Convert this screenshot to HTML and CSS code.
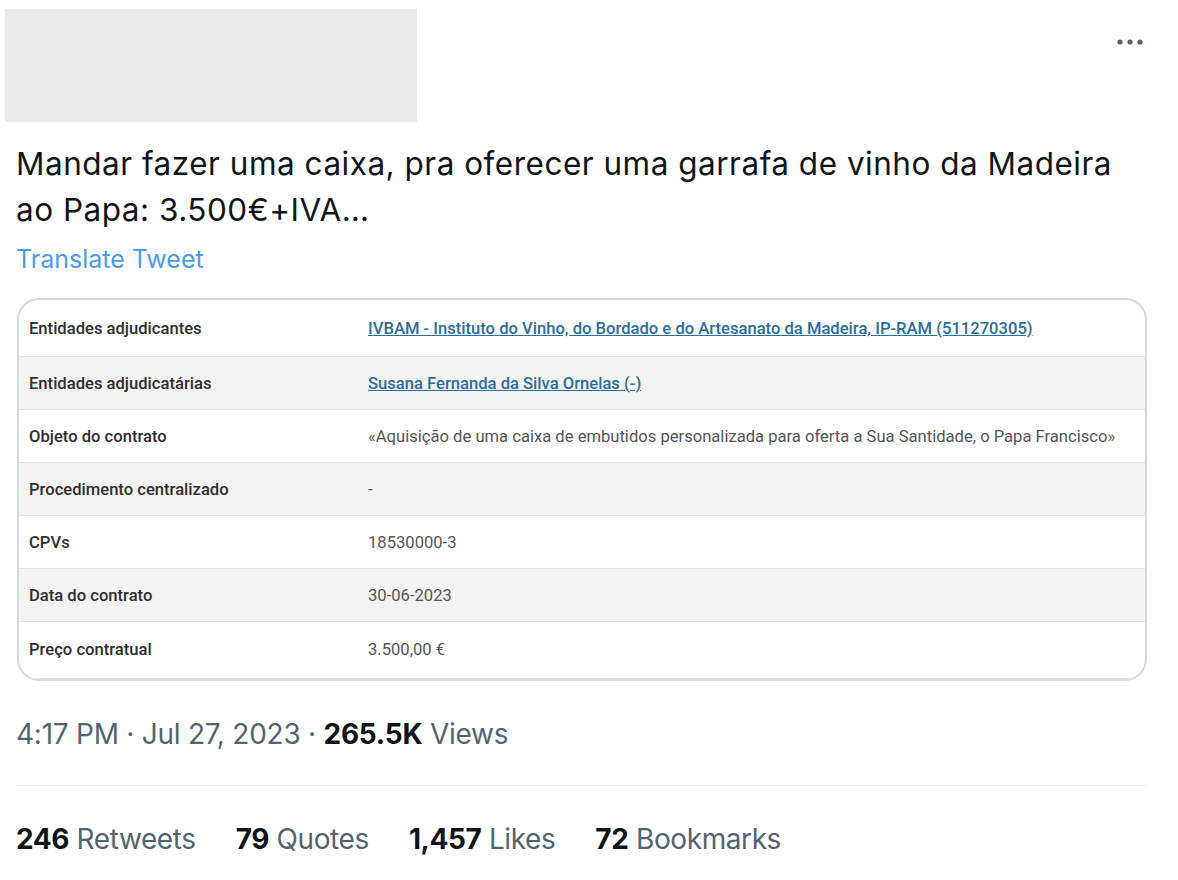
FILE: index.html
```html
<!DOCTYPE html>
<html lang="pt">

<head>
    <meta charset="UTF-8">
    <meta name="viewport" content="width=device-width, initial-scale=1.0">
    <title>Tweet</title>
    <link rel="stylesheet" href="styles.css">
</head>

<body>
    <div class="tweet">
        <div class="head">
            <div class="author"></div>
            <div class="more">
                <svg width="26" height="6" viewBox="0 0 26 6"><circle cx="3" cy="3" r="2.6" /><circle cx="13" cy="3" r="2.6" /><circle cx="23" cy="3" r="2.6" /></svg>
            </div>
        </div>

        <p class="text">Mandar fazer uma caixa, pra oferecer uma garrafa de vinho da Madeira ao Papa: 3.500€+IVA…</p>
        <a class="translate">Translate Tweet</a>

        <div class="card">
            <div class="row"><span class="label">Entidades adjudicantes</span><span class="value"><a>IVBAM - Instituto do Vinho, do Bordado e do Artesanato da Madeira, IP-RAM (511270305)</a></span></div>
            <div class="row"><span class="label">Entidades adjudicatárias</span><span class="value"><a>Susana Fernanda da Silva Ornelas (-)</a></span></div>
            <div class="row"><span class="label">Objeto do contrato</span><span class="value">«Aquisição de uma caixa de embutidos personalizada para oferta a Sua Santidade, o Papa Francisco»</span></div>
            <div class="row"><span class="label">Procedimento centralizado</span><span class="value">-</span></div>
            <div class="row"><span class="label">CPVs</span><span class="value">18530000-3</span></div>
            <div class="row"><span class="label">Data do contrato</span><span class="value">30-06-2023</span></div>
            <div class="row"><span class="label">Preço contratual</span><span class="value">3.500,00 €</span></div>
        </div>

        <div class="time">4:17 PM · Jul 27, 2023 · <b>265.5K</b> Views</div>

        <div class="stats">
            <span><b>246</b> Retweets</span>
            <span><b>79</b> Quotes</span>
            <span><b>1,457</b> Likes</span>
            <span><b>72</b> Bookmarks</span>
        </div>
    </div>
</body>

</html>
```

FILE: styles.css
```css
* {
    margin: 0;
    padding: 0;
    box-sizing: border-box;
}

body {
    background: #fff;
    font-family: Inter, 'Noto Sans', sans-serif;
    color: #0f1419;
}

.tweet {
    width: 1178px;
    padding: 0 31px 0 16px;
}

.head {
    display: flex;
    justify-content: space-between;
    margin-left: -11px;
    padding-top: 9px;
}

.author {
    width: 412px;
    height: 113px;
    background: #ebebeb;
}

.more {
    padding-top: 20px;
    padding-right: 4px;
}

.more svg {
    fill: #536471;
}

.text {
    margin-top: 19px;
    font-size: 31.5px;
    line-height: 46px;
    letter-spacing: 0.5px;
}

.translate {
    display: block;
    margin-top: 10px;
    font-size: 25px;
    line-height: 32px;
    color: #4a9ced;
}

.card {
    margin-top: 23px;
    margin-left: 1px;
    border: 2px solid #d3dbe0;
    border-radius: 22px;
    overflow: hidden;
    font-family: Roboto, sans-serif;
    font-size: 16.6px;
}

.row {
    display: flex;
    align-items: center;
    height: 53px;
    border-bottom: 1px solid #e2e2e2;
}

.row:first-child {
    height: 57px;
    padding-top: 1px;
}

.row:last-child {
    height: 57px;
    padding-bottom: 2px;
}

.row:nth-child(even) {
    background: #f3f3f3;
}

.label {
    width: 349px;
    flex: none;
    padding-left: 10px;
    font-weight: 500;
    color: #2e2e2e;
}

.value {
    color: #555;
}

.value a {
    color: #2d6d9c;
    text-decoration: underline;
    font-weight: 500;
}

.time {
    margin-top: 36px;
    font-size: 28px;
    color: #536471;
    letter-spacing: -0.25px;
    padding-bottom: 34px;
    border-bottom: 1px solid #eff3f4;
}

.time b {
    color: #0f1419;
}

.stats {
    display: flex;
    gap: 40px;
    padding-top: 36px;
    font-size: 28px;
    color: #536471;
    letter-spacing: -0.4px;
}

.stats b {
    color: #0f1419;
}
```
